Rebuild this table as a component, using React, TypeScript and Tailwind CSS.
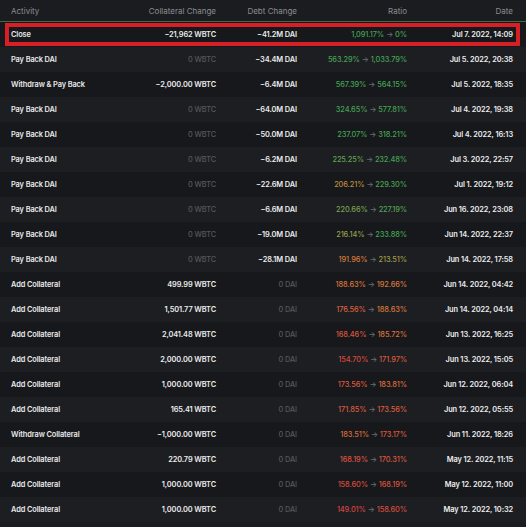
const rows: [string, string, string, number, number, string][] = [
  ["Close", "−21,962 WBTC", "−41.2M DAI", 1091.17, 0, "Jul 7. 2022, 14:09"],
  ["Pay Back DAI", "0 WBTC", "−34.4M DAI", 563.29, 1033.79, "Jul 5. 2022, 20:38"],
  ["Withdraw & Pay Back", "−2,000.00 WBTC", "−6.4M DAI", 567.39, 564.15, "Jul 5. 2022, 18:35"],
  ["Pay Back DAI", "0 WBTC", "−64.0M DAI", 324.65, 577.81, "Jul 4. 2022, 19:38"],
  ["Pay Back DAI", "0 WBTC", "−50.0M DAI", 237.07, 318.21, "Jul 4. 2022, 16:13"],
  ["Pay Back DAI", "0 WBTC", "−6.2M DAI", 225.25, 232.48, "Jul 3. 2022, 22:57"],
  ["Pay Back DAI", "0 WBTC", "−22.6M DAI", 206.21, 229.3, "Jul 1. 2022, 19:12"],
  ["Pay Back DAI", "0 WBTC", "−6.6M DAI", 220.66, 227.19, "Jun 16. 2022, 23:08"],
  ["Pay Back DAI", "0 WBTC", "−19.0M DAI", 216.14, 233.88, "Jun 14. 2022, 22:37"],
  ["Pay Back DAI", "0 WBTC", "−28.1M DAI", 191.96, 213.51, "Jun 14. 2022, 17:58"],
  ["Add Collateral", "499.99 WBTC", "0 DAI", 188.63, 192.66, "Jun 14. 2022, 04:42"],
  ["Add Collateral", "1,501.77 WBTC", "0 DAI", 176.56, 188.63, "Jun 14. 2022, 04:14"],
  ["Add Collateral", "2,041.48 WBTC", "0 DAI", 168.46, 185.72, "Jun 13. 2022, 16:25"],
  ["Add Collateral", "2,000.00 WBTC", "0 DAI", 154.7, 171.97, "Jun 13. 2022, 15:05"],
  ["Add Collateral", "1,000.00 WBTC", "0 DAI", 173.56, 183.81, "Jun 12. 2022, 06:04"],
  ["Add Collateral", "165.41 WBTC", "0 DAI", 171.85, 173.56, "Jun 12. 2022, 05:55"],
  ["Withdraw Collateral", "−1,000.00 WBTC", "0 DAI", 183.51, 173.17, "Jun 11. 2022, 18:26"],
  ["Add Collateral", "220.79 WBTC", "0 DAI", 168.19, 170.31, "May 12. 2022, 11:15"],
  ["Add Collateral", "1,000.00 WBTC", "0 DAI", 158.6, 168.19, "May 12. 2022, 11:00"],
  ["Add Collateral", "1,000.00 WBTC", "0 DAI", 149.01, 158.6, "May 12. 2022, 10:32"],
];

// colour stops for the collateral ratio, red when low, green when healthy
const stops: [number, number[]][] = [
  [150, [214, 68, 62]],
  [175, [220, 92, 62]],
  [190, [218, 120, 58]],
  [205, [196, 138, 62]],
  [216, [150, 160, 74]],
  [230, [70, 160, 85]],
];

function ratioColor(v: number) {
  if (v === 0 || v >= 230) return "rgb(70,160,85)";
  if (v <= 150) return "rgb(214,68,62)";
  for (let i = 0; i < stops.length - 1; i++) {
    const [a, ca] = stops[i];
    const [b, cb] = stops[i + 1];
    if (v >= a && v <= b) {
      const t = (v - a) / (b - a);
      const c = ca.map((x, k) => Math.round(x + (cb[k] - x) * t));
      return `rgb(${c.join(",")})`;
    }
  }
  return "rgb(70,160,85)";
}

function fmt(v: number) {
  if (v === 0) return "0%";
  return (
    v.toLocaleString("en-US", { minimumFractionDigits: 2, maximumFractionDigits: 2 }) + "%"
  );
}

const grid = "grid grid-cols-[105px_100px_81px_110px_106px] pl-[11px] pr-[13px] items-center";

export default function App() {
  return (
    <div
      className="w-[526px] h-[527px] overflow-hidden bg-[#1a1c1f]"
      style={{ fontFamily: "Inter, 'Noto Sans', sans-serif" }}
    >
      <div className={`${grid} h-[22px] text-[8px] text-[#8a8d92] border-b border-[#3c6e45]`}>
        <div>Activity</div>
        <div className="text-right">Collateral Change</div>
        <div className="text-right">Debt Change</div>
        <div className="text-right">Ratio</div>
        <div className="text-right">Date</div>
      </div>
      {rows.map(([activity, coll, debt, from, to, date], i) => (
        <div
          key={i}
          className={`${grid} relative h-[25px] text-[7.4px] tracking-[-0.1px] font-semibold ${
            i % 2 === 0 ? "bg-[#16181b]" : "bg-[#1c1e22]"
          }`}
        >
          <div className="text-[#e9e9ea]">{activity}</div>
          <div className={`text-right ${coll === "0 WBTC" ? "text-[#55585d] font-medium" : "text-[#ececed]"}`}>
            {coll}
          </div>
          <div className={`text-right ${debt === "0 DAI" ? "text-[#55585d] font-medium" : "text-[#ececed]"}`}>
            {debt}
          </div>
          <div className="text-right font-medium">
            <span style={{ color: ratioColor(from) }}>{fmt(from)}</span>
            <span className="text-[#6b6e73] mx-[2px]">→</span>
            <span style={{ color: ratioColor(to) }}>{fmt(to)}</span>
          </div>
          <div className="text-right text-[#ececed]">{date}</div>
          {i === 0 && (
            <div className="absolute left-[5px] right-[6px] top-[1px] bottom-[1px] border-[4px] border-[#d61f27]" />
          )}
        </div>
      ))}
    </div>
  );
}
